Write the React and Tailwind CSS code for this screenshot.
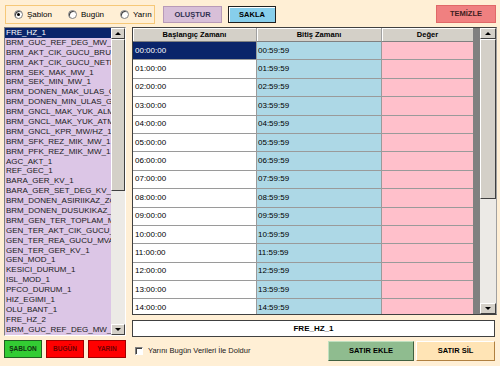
const items = [
  'FRE_HZ_1',
  'BRM_GUC_REF_DEG_MW_1',
  'BRM_AKT_CIK_GUCU_BRUT',
  'BRM_AKT_CIK_GUCU_NETMW',
  'BRM_SEK_MAK_MW_1',
  'BRM_SEK_MIN_MW_1',
  'BRM_DONEN_MAK_ULAS_GUC',
  'BRM_DONEN_MIN_ULAS_GUC',
  'BRM_GNCL_MAK_YUK_ALMA',
  'BRM_GNCL_MAK_YUK_ATMA',
  'BRM_GNCL_KPR_MW/HZ_1',
  'BRM_SFK_REZ_MIK_MW_1',
  'BRM_PFK_REZ_MIK_MW_1',
  'AGC_AKT_1',
  'REF_GEC_1',
  'BARA_GER_KV_1',
  'BARA_GER_SET_DEG_KV_1',
  'BRM_DONEN_ASIRIIKAZ_ZO',
  'BRM_DONEN_DUSUKIKAZ_ZO',
  'BRM_GEN_TER_TOPLAM_MW',
  'GEN_TER_AKT_CIK_GUCU_MW',
  'GEN_TER_REA_GUCU_MVAR',
  'GEN_TER_GER_KV_1',
  'GEN_MOD_1',
  'KESICI_DURUM_1',
  'ISL_MOD_1',
  'PFCO_DURUM_1',
  'HIZ_EGIMI_1',
  'OLU_BANT_1',
  'FRE_HZ_2',
  'BRM_GUC_REF_DEG_MW_2',
];

const rows = Array.from({ length: 15 }, (_, i) => {
  const h = String(i).padStart(2, '0');
  return { start: `${h}:00:00`, end: `${h}:59:59` };
});

function Radio({ checked, label }) {
  return (
    <label className="flex items-center gap-[4px]">
      <span className="flex h-[9px] w-[9px] items-center justify-center rounded-full border border-[#808080] bg-white shadow-[inset_1px_1px_0_#404040]">
        {checked && <span className="h-[3px] w-[3px] rounded-full bg-black" />}
      </span>
      <span>{label}</span>
    </label>
  );
}

function Arrow({ up }) {
  return (
    <div className="flex h-[11px] items-center justify-center border border-t-white border-l-white border-r-[#404040] border-b-[#404040] bg-[#D4D0C8]">
      <div
        className={`h-0 w-0 border-x-[3px] border-x-transparent ${
          up ? 'border-b-[3px] border-b-black' : 'border-t-[3px] border-t-black'
        }`}
      />
    </div>
  );
}

function ScrollBar({ width, thumb }) {
  return (
    <div className={`flex h-full flex-col bg-[#ECEAE6] ${width}`}>
      <Arrow up />
      <div className={`border border-t-white border-l-white border-r-[#404040] border-b-[#404040] bg-[#D4D0C8] ${thumb}`} />
      <div className="flex-1" />
      <Arrow />
    </div>
  );
}

export default function App() {
  return (
    <div
      className="h-[366px] w-[500px] overflow-hidden bg-[#FFEFD5] text-black"
      style={{ fontFamily: '"Liberation Sans", Arial, sans-serif' }}
    >
      <div className="flex items-start pt-[5px]">
        <div className="ml-[5px] flex h-[19px] w-[150px] items-center gap-[16px] border border-[#F6C878] pl-[8px] text-[8px]">
          <Radio checked label="Şablon" />
          <Radio label="Bugün" />
          <Radio label="Yarın" />
        </div>
        <button className="ml-[8px] mt-[1px] h-[17px] w-[59px] border border-[#B89AB8] bg-[#D8BFD8] text-[7.5px] font-bold text-[#303050]">
          OLUŞTUR
        </button>
        <button className="ml-[6px] mt-[1px] h-[17px] w-[48px] border border-[#202020] bg-[#87CEEB] text-[7.5px] font-bold text-black shadow-[inset_1px_1px_0_#ffffff]">
          SAKLA
        </button>
        <button className="ml-auto mr-[4px] h-[18px] w-[60px] border border-[#E06868] bg-[#F08080] text-[7.5px] font-bold text-[#402020]">
          TEMİZLE
        </button>
      </div>

      <div className="mt-[3px] flex">
        <div className="ml-[4px] w-[122px]">
          <div className="flex h-[309px] border border-t-[#808080] border-l-[#808080] border-r-white border-b-white">
            <div className="w-[106px] overflow-hidden bg-[#DCC6E6] text-[8px]">
              {items.map((it, i) => (
                <div
                  key={it}
                  className={`h-[9.9px] whitespace-nowrap pl-[1px] leading-[9.9px] ${
                    i === 0 ? 'bg-[#0A246A] text-white' : 'text-[#202020]'
                  }`}
                >
                  {it}
                </div>
              ))}
            </div>
            <ScrollBar width="w-[14px]" thumb="h-[152px]" />
          </div>
          <div className="mt-[4px] flex gap-[4px]">
            <button className="h-[18px] w-[38px] border border-[#206020] bg-[#33CC33] text-[6.5px] font-bold text-[#103010]">
              ŞABLON
            </button>
            <button className="h-[18px] w-[38px] border border-[#A00000] bg-[#FF0000] text-[6.5px] font-bold text-[#700000]">
              BUGÜN
            </button>
            <button className="h-[18px] w-[38px] border border-[#A00000] bg-[#FF0000] text-[6.5px] font-bold text-[#700000]">
              YARIN
            </button>
          </div>
        </div>

        <div className="ml-[6px] w-[365px]">
          <div className="flex h-[288px] overflow-hidden border border-t-[#404040] border-l-[#404040] border-r-[#A0A0A0] border-b-[#404040] bg-white">
            <div className="w-[340px] text-[7.5px]">
              <div className="flex h-[14px] bg-[#D4D0C8] font-bold">
                <div className="flex w-[124px] items-center justify-center border-r border-b border-r-[#A0A0A0] border-b-[#808080] shadow-[inset_1px_1px_0_#ffffff]">
                  Başlangıç Zamanı
                </div>
                <div className="flex w-[125px] items-center justify-center border-r border-b border-r-[#A0A0A0] border-b-[#808080] shadow-[inset_1px_1px_0_#ffffff]">
                  Bitiş Zamanı
                </div>
                <div className="flex w-[91px] items-center justify-center border-b border-b-[#808080] shadow-[inset_1px_1px_0_#ffffff]">
                  Değer
                </div>
              </div>
              {rows.map((r, i) => (
                <div key={r.start} className="flex h-[18.4px] border-b border-b-[#9A9A9A] text-[8px]">
                  <div
                    className={`flex w-[124px] items-center border-r border-r-[#9A9A9A] pl-[2px] ${
                      i === 0 ? 'bg-[#0A246A] text-white' : 'bg-white'
                    }`}
                  >
                    {r.start}
                  </div>
                  <div className="flex w-[125px] items-center border-r border-r-[#9A9A9A] bg-[#ADD8E6] pl-[1px]">
                    {r.end}
                  </div>
                  <div className="w-[91px] bg-[#FFC0CB]" />
                </div>
              ))}
            </div>
            <div className="w-[7px] bg-[#808080]" />
            <ScrollBar width="w-[16px]" thumb="h-[160px]" />
          </div>

          <div className="mt-[5px] mr-[2px] flex h-[17px] items-center justify-center border border-[#404040] bg-white text-[8px] font-bold">
            FRE_HZ_1
          </div>

          <div className="mt-[4px] flex items-center">
            <span className="ml-[3px] h-[8px] w-[8px] border border-t-[#808080] border-l-[#808080] border-r-white border-b-white bg-white shadow-[inset_1px_1px_0_#404040]" />
            <span className="ml-[5px] text-[7.5px] text-[#202020]">Yarını Bugün Verileri İle Doldur</span>
            <button className="ml-auto h-[20px] w-[86px] border border-t-[#C0E0C0] border-l-[#C0E0C0] border-r-[#406040] border-b-[#406040] bg-[#8FBC8F] text-[7.5px] font-bold">
              SATIR EKLE
            </button>
            <button className="ml-[2px] mr-[2px] h-[20px] w-[79px] border border-t-white border-l-white border-r-[#B08040] border-b-[#B08040] bg-[#FFE4B5] text-[7.5px] font-bold">
              SATIR SİL
            </button>
          </div>
        </div>
      </div>
    </div>
  );
}
